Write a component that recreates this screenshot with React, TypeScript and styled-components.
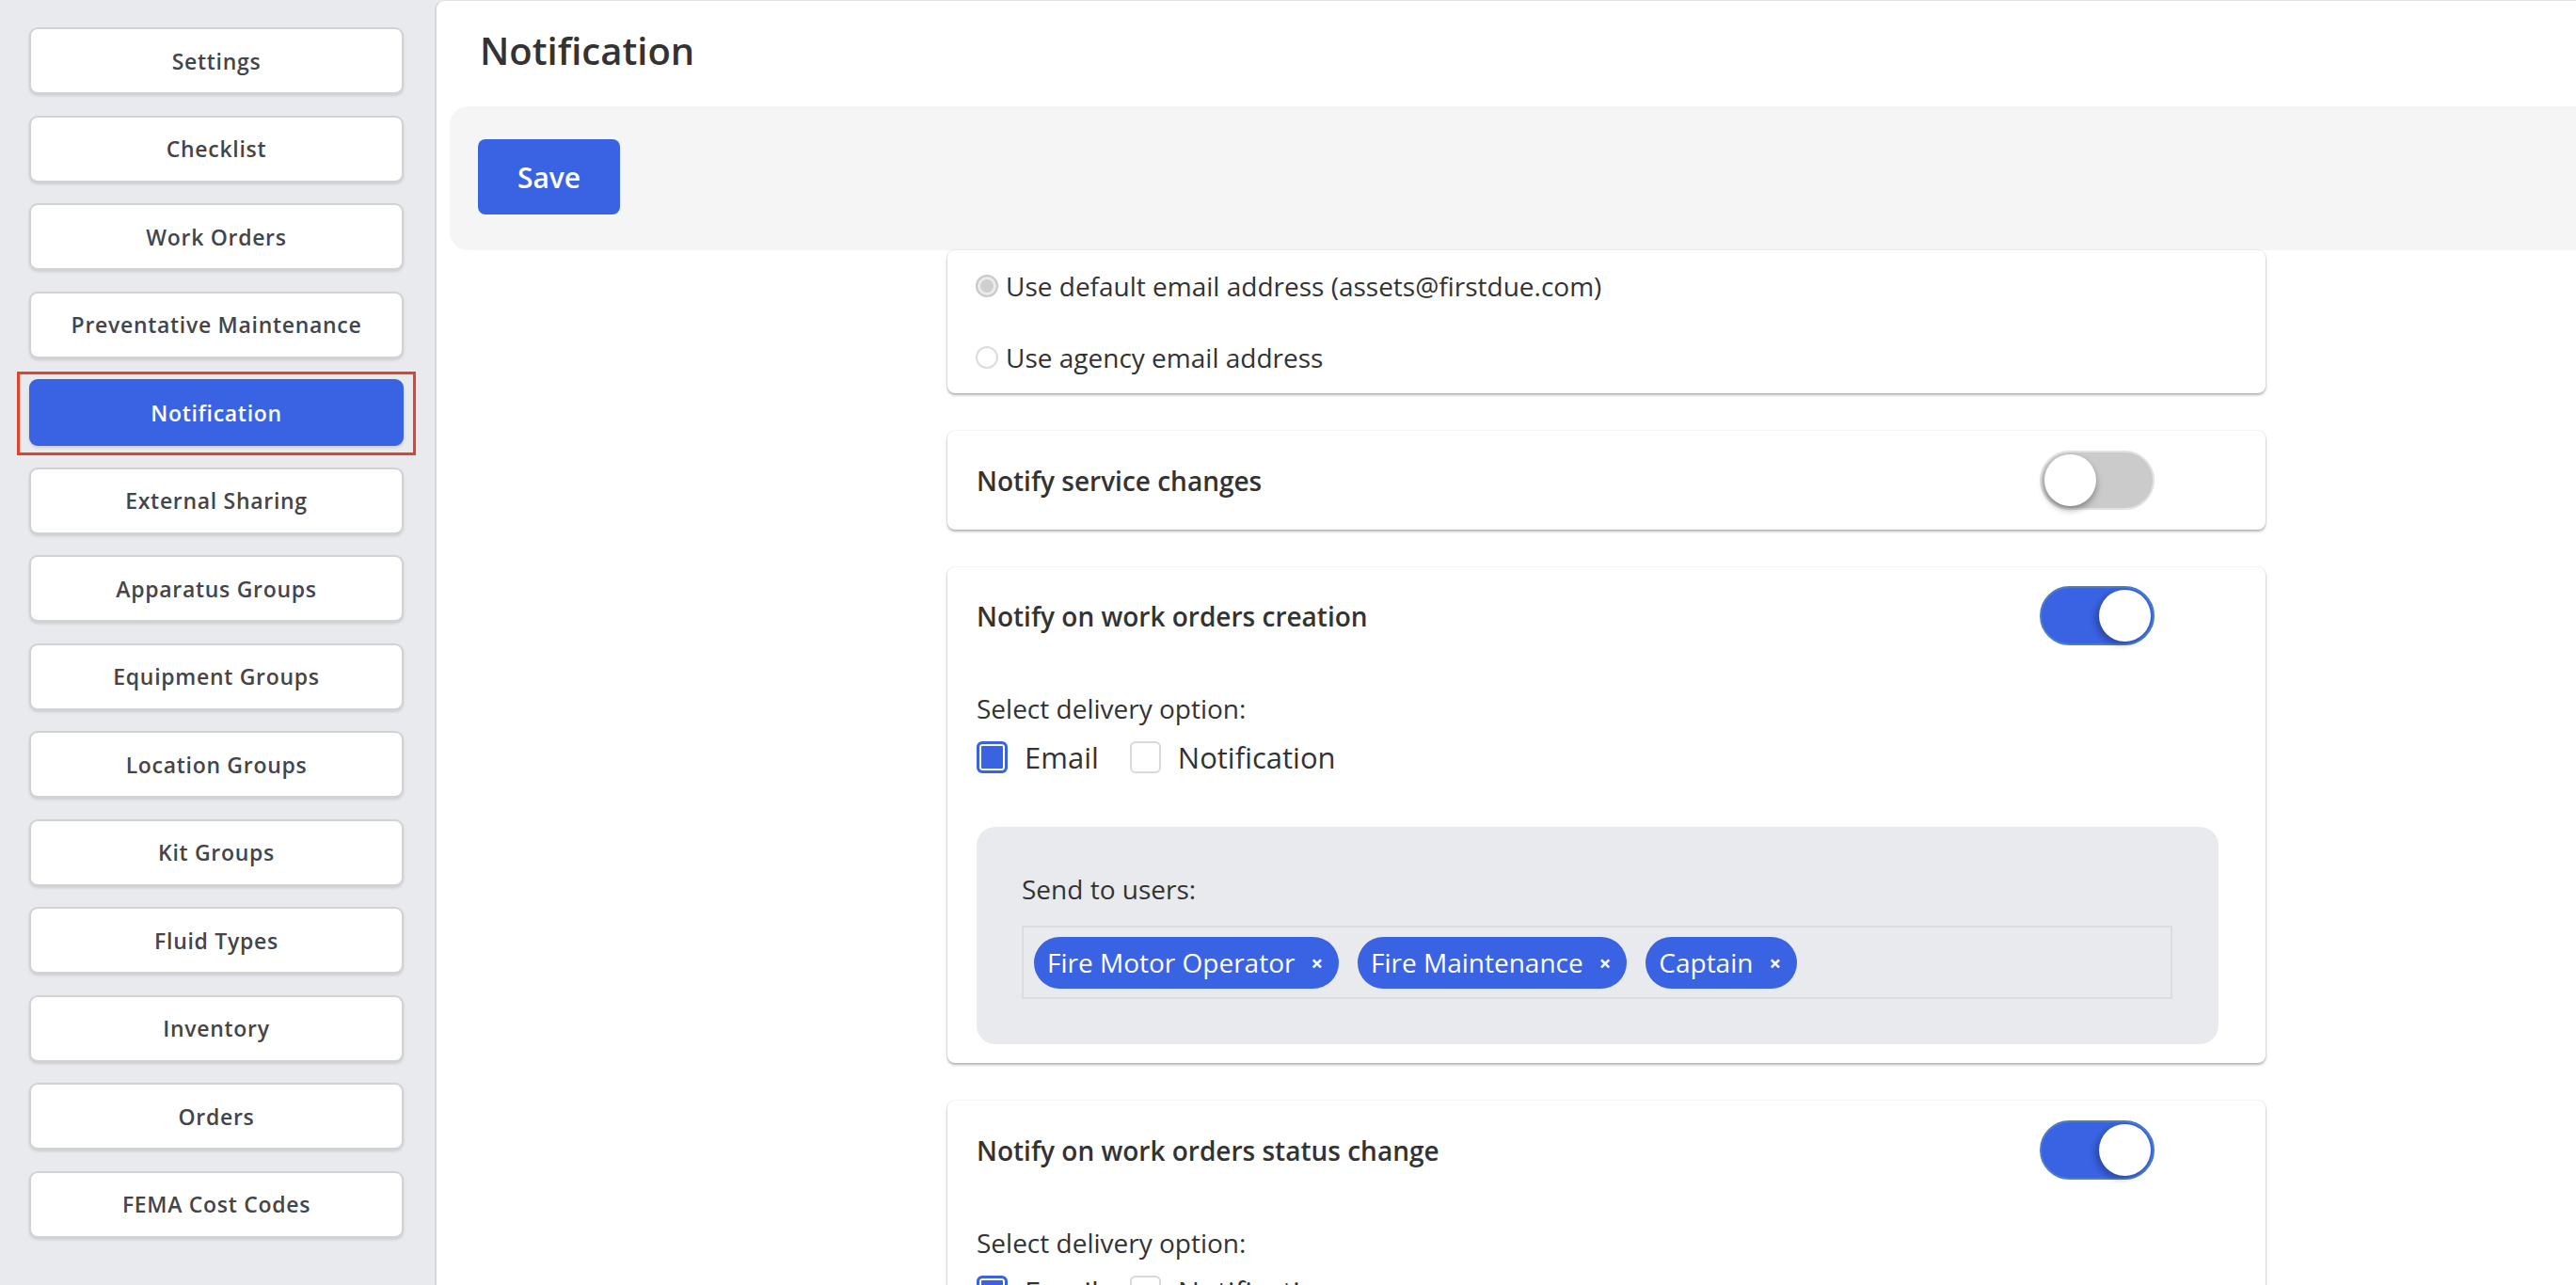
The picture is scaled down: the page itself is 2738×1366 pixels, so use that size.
import styled, { createGlobalStyle } from "styled-components";

const GlobalStyle = createGlobalStyle`
  html, body {
    margin: 0;
    padding: 0;
    background: #ffffff;
  }
  body {
    font-family: "Open Sans", "Liberation Sans", sans-serif;
    color: #333333;
  }
`;

const BLUE = "#3a63e4";

const Page = styled.div`
  display: flex;
  height: 100vh;
  overflow: hidden;
  background: #e9eaee;
`;

const Sidebar = styled.nav`
  width: 462px;
  flex-shrink: 0;
  box-sizing: border-box;
  padding: 29px 0 0 31px;
  display: flex;
  flex-direction: column;
  gap: 22.5px;
`;

const NavButton = styled.button<{ $active?: boolean }>`
  position: relative;
  width: 398px;
  height: 71px;
  box-sizing: border-box;
  border-radius: 9px;
  border: 2px solid ${(p) => (p.$active ? BLUE : "#d2d2d4")};
  background: ${(p) => (p.$active ? BLUE : "#ffffff")};
  color: ${(p) => (p.$active ? "#ffffff" : "#444549")};
  box-shadow: 0 2px 3px rgba(0, 0, 0, 0.12);
  font-family: "Open Sans", sans-serif;
  font-weight: 600;
  font-size: 23px;
  letter-spacing: 0.7px;
  cursor: pointer;

  ${(p) =>
    p.$active &&
    `
    &::after {
      content: "";
      position: absolute;
      top: -10px;
      bottom: -12px;
      left: -15px;
      right: -15px;
      border: 3px solid #e4412b;
      pointer-events: none;
    }
  `}
`;

const Main = styled.main`
  flex: 1;
  background: #ffffff;
  border-left: 2px solid #d6d6d8;
  border-top: 1px solid #e2e2e2;
  border-top-left-radius: 10px;
  padding-top: 26px;
  overflow: hidden;
`;

const Title = styled.h1`
  margin: 0 0 32px 46px;
  font-size: 40px;
  font-weight: 600;
  color: #333333;
  line-height: 1.36;
`;

const SaveBar = styled.div`
  margin-left: 14px;
  background: #f5f5f5;
  border-radius: 20px 0 0 20px;
  padding: 35px 30px 38px;
`;

const SaveButton = styled.button`
  width: 151px;
  height: 80px;
  border: none;
  border-radius: 8px;
  background: ${BLUE};
  color: #ffffff;
  font-family: "Open Sans", sans-serif;
  font-weight: 600;
  font-size: 30px;
  cursor: pointer;
`;

const Cards = styled.div`
  margin-left: 543px;
  width: 1401px;
  display: flex;
  flex-direction: column;
  gap: 40px;
`;

const Card = styled.section<{ $pad?: string }>`
  background: #ffffff;
  border-radius: 8px;
  box-shadow: 0 2px 3px rgba(0, 0, 0, 0.3), 0 0 2px rgba(0, 0, 0, 0.12);
  padding: ${(p) => p.$pad || "20px 31px"};
`;

const RadioList = styled.div`
  display: flex;
  flex-direction: column;
  gap: 38px;
`;

const RadioRow = styled.label`
  display: flex;
  align-items: center;
  height: 38px;
  font-size: 28px;
  color: #333333;
  gap: 8px;
`;

const RadioDot = styled.span<{ $checked?: boolean }>`
  width: 24px;
  height: 24px;
  box-sizing: border-box;
  border-radius: 50%;
  border: 2px solid ${(p) => (p.$checked ? "#c9c9c9" : "#dcdcdc")};
  background: ${(p) => (p.$checked ? "#cfcfcf" : "#ffffff")};
  box-shadow: ${(p) => (p.$checked ? "inset 0 0 0 3px #ececec" : "none")};
  margin-left: -1px;
`;

const HeaderRow = styled.div`
  display: flex;
  align-items: center;
  justify-content: space-between;
  height: 63px;
  padding-right: 87px;
`;

const CardTitle = styled.h2`
  margin: 0;
  font-size: 28px;
  font-weight: 600;
  color: #333333;
`;

const Track = styled.span<{ $on?: boolean }>`
  position: relative;
  width: 122px;
  height: 63px;
  box-sizing: border-box;
  border-radius: 32px;
  background: ${(p) => (p.$on ? BLUE : "#cbcbcb")};
  border: 2px solid ${(p) => (p.$on ? "#4b7ec8" : "#e2e2e2")};
`;

const Knob = styled.span<{ $on?: boolean }>`
  position: absolute;
  top: 2px;
  ${(p) => (p.$on ? "right: 2px;" : "left: 3px;")}
  width: 55px;
  height: 55px;
  border-radius: 50%;
  background: #ffffff;
  box-shadow: ${(p) =>
    p.$on ? "-4px 3px 7px rgba(0, 0, 0, 0.28)" : "0 4px 7px rgba(0, 0, 0, 0.35)"};
`;

const Label = styled.div`
  margin-top: 48px;
  font-size: 28px;
  line-height: 38px;
  color: #333333;
`;

const OptionRow = styled.div`
  margin-top: 12px;
  height: 42px;
  display: flex;
  align-items: center;
`;

const Check = styled.span<{ $checked?: boolean }>`
  width: 33px;
  height: 34px;
  box-sizing: border-box;
  border-radius: 6px;
  border: ${(p) => (p.$checked ? `3px solid ${BLUE}` : "2px solid #d9d9d9")};
  background: ${(p) => (p.$checked ? BLUE : "#ffffff")};
  box-shadow: ${(p) => (p.$checked ? "inset 0 0 0 2px #ffffff" : "none")};
  margin-right: 18px;
`;

const OptionText = styled.span`
  font-size: 31px;
  line-height: 42px;
  color: #333333;
  margin-right: 33px;
`;

const SendBox = styled.div`
  margin-top: 53px;
  width: 1320px;
  box-sizing: border-box;
  background: #e9eaee;
  border-radius: 20px;
  padding: 47px 49px 48px 48px;
`;

const SendLabel = styled.div`
  font-size: 28px;
  line-height: 38px;
  color: #333333;
`;

const TagInput = styled.div`
  margin-top: 20px;
  height: 78px;
  box-sizing: border-box;
  border: 2px solid #dcdcde;
  padding: 0 11px;
  display: flex;
  align-items: center;
  gap: 20px;
`;

const Chip = styled.span`
  display: inline-flex;
  align-items: center;
  height: 55px;
  padding: 0 17px 0 14px;
  border-radius: 28px;
  background: ${BLUE};
  color: #ffffff;
  font-size: 28px;
`;

const ChipClose = styled.span`
  margin-left: 17px;
  font-size: 22px;
  font-weight: 700;
`;

const navItems = [
  "Settings",
  "Checklist",
  "Work Orders",
  "Preventative Maintenance",
  "Notification",
  "External Sharing",
  "Apparatus Groups",
  "Equipment Groups",
  "Location Groups",
  "Kit Groups",
  "Fluid Types",
  "Inventory",
  "Orders",
  "FEMA Cost Codes",
];

const users = ["Fire Motor Operator", "Fire Maintenance", "Captain"];

const Toggle = ({ on }: { on?: boolean }) => (
  <Track $on={on}>
    <Knob $on={on} />
  </Track>
);

const Delivery = () => (
  <>
    <Label>Select delivery option:</Label>
    <OptionRow>
      <Check $checked />
      <OptionText>Email</OptionText>
      <Check />
      <OptionText>Notification</OptionText>
    </OptionRow>
  </>
);

const Recipients = () => (
  <SendBox>
    <SendLabel>Send to users:</SendLabel>
    <TagInput>
      {users.map((u) => (
        <Chip key={u}>
          {u}
          <ChipClose>×</ChipClose>
        </Chip>
      ))}
    </TagInput>
  </SendBox>
);

const App = () => {
  return (
    <>
      <GlobalStyle />
      <Page>
        <Sidebar>
          {navItems.map((item) => (
            <NavButton key={item} $active={item === "Notification"}>
              {item}
            </NavButton>
          ))}
        </Sidebar>
        <Main>
          <Title>Notification</Title>
          <SaveBar>
            <SaveButton>Save</SaveButton>
          </SaveBar>
          <Cards>
            <Card $pad="19px 31px">
              <RadioList>
                <RadioRow>
                  <RadioDot $checked />
                  Use default email address (assets@firstdue.com)
                </RadioRow>
                <RadioRow>
                  <RadioDot />
                  Use agency email address
                </RadioRow>
              </RadioList>
            </Card>

            <Card $pad="21px 31px">
              <HeaderRow>
                <CardTitle>Notify service changes</CardTitle>
                <Toggle />
              </HeaderRow>
            </Card>

            <Card $pad="20px 31px 20px">
              <HeaderRow>
                <CardTitle>Notify on work orders creation</CardTitle>
                <Toggle on />
              </HeaderRow>
              <Delivery />
              <Recipients />
            </Card>

            <Card $pad="21px 31px 20px">
              <HeaderRow>
                <CardTitle>Notify on work orders status change</CardTitle>
                <Toggle on />
              </HeaderRow>
              <Delivery />
              <Recipients />
            </Card>
          </Cards>
        </Main>
      </Page>
    </>
  );
};

export default App;
